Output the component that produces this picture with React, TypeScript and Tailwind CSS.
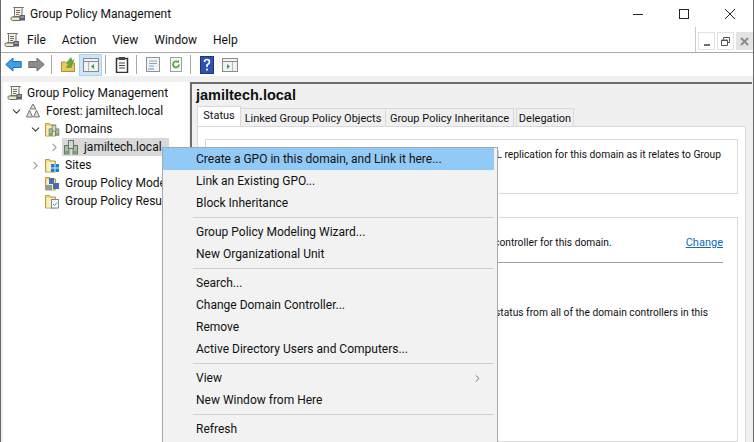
import { ChevronDown, ChevronRight } from 'lucide-react';
import { ReactNode } from 'react';

function ScrollIcon({ className = '' }: { className?: string }) {
  return (
    <svg width="16" height="16" viewBox="0 0 16 16" className={className}>
      <path d="M3.500 1.500h10q-1.500.5-1.500 2v7H3.500q1-.5 1-2V3q0-1-1-1.500z" fill="#f6f2e2" stroke="#6f6f66" />
      <path d="M6 4.500h4M6 6.500h4M6 8.500h3" stroke="#6f6f66" />
      <path d="M1.500 11h8.500v3.500H2.500q-1.500 0-1.500-1.700 0-1.300.5-1.800z" fill="#ece6cc" stroke="#6f6f66" />
      <rect x="9.500" y="9" width="5.500" height="5.500" fill="#5c6168" />
      <path d="M10.500 11h3.500" stroke="#c9ccd0" />
    </svg>
  );
}

function Folder({ children }: { children?: ReactNode }) {
  return (
    <svg width="16" height="16" viewBox="0 0 16 16">
      <path d="M1.500 15V2.500h4l1 1.500h5v11z" fill="#f3d77d" stroke="#bd9a45" />
      <rect x="2.500" y="5" width="8" height="9.500" fill="#fbeeb6" />
      {children}
    </svg>
  );
}

function ServerBits() {
  return (
    <>
      <rect x="1.500" y="6.500" width="4.500" height="8.500" fill="#a9bba9" stroke="#66766a" />
      <rect x="10" y="6.500" width="4.500" height="8.500" fill="#a9bba9" stroke="#66766a" />
      <rect x="5.500" y="1.500" width="5" height="8" fill="#ced9c8" stroke="#66766a" />
      <path d="M2.500 13h2.500M11 13h2.500" stroke="#57b043" strokeWidth="2" />
    </>
  );
}

function TreeRow({
  label,
  icon,
  indent,
  toggle,
  selected,
}: {
  label: string;
  icon: ReactNode;
  indent: string;
  toggle?: 'open' | 'closed';
  selected?: boolean;
}) {
  return (
    <div className={`flex h-[18px] items-center ${indent}`}>
      <span className="flex w-[16px] shrink-0 justify-center">
        {toggle === 'open' && <ChevronDown size={13} strokeWidth={2} className="text-[#3c3c3c]" />}
        {toggle === 'closed' && <ChevronRight size={13} strokeWidth={2} className="text-[#a6a6a6]" />}
      </span>
      <span className={`flex h-[18px] items-center gap-[5px] whitespace-nowrap pr-[7px] pl-px ${selected ? 'bg-[#d9d9d9]' : ''}`}>
        {icon}
        <span>{label}</span>
      </span>
    </div>
  );
}

function ToolButton({ children, active }: { children: ReactNode; active?: boolean }) {
  return (
    <span className={`flex h-[22px] w-[23px] items-center justify-center ${active ? 'border border-[#a9d3f2] bg-[#cde6f7]' : ''}`}>
      {children}
    </span>
  );
}

function Sep() {
  return <span className="ml-[3px] mr-[4px] h-[19px] w-px bg-[#a8a8a8]" />;
}

function MenuItem({ label, hot, arrow }: { label: string; hot?: boolean; arrow?: boolean }) {
  return (
    <div className={`flex h-[22px] items-center justify-between pr-[11px] pl-[33px] ${hot ? 'bg-[#91c9f7]' : ''}`}>
      <span>{label}</span>
      {arrow && <ChevronRight size={11} strokeWidth={1.5} className="text-[#333]" />}
    </div>
  );
}

function MenuSep() {
  return <div className="my-[3px] ml-[30px] h-px bg-[#d0d0d0]" />;
}

export default function App() {
  return (
    <div className="relative flex h-[442px] w-[754px] flex-col overflow-hidden border-x border-[#6a6a6a] bg-white font-['Roboto',sans-serif] text-[12px] leading-none text-[#111]">
      {/* Title bar */}
      <div className="flex h-[27px] shrink-0 items-center">
        <ScrollIcon className="ml-[9px]" />
        <span className="ml-[4px]">Group Policy Management</span>
        <div className="ml-auto flex items-center">
          <span className="flex w-[46px] justify-center">
            <svg width="12" height="12" viewBox="0 0 12 12"><path d="M1 6.500h10" stroke="#222" /></svg>
          </span>
          <span className="flex w-[46px] justify-center">
            <svg width="12" height="12" viewBox="0 0 12 12"><rect x="1.500" y="1.500" width="9" height="9" fill="none" stroke="#222" /></svg>
          </span>
          <span className="flex w-[46px] justify-center">
            <svg width="12" height="12" viewBox="0 0 12 12"><path d="M1 1l10 10M11 1L1 11" stroke="#222" /></svg>
          </span>
        </div>
      </div>

      {/* Menu bar */}
      <div className="flex h-[26px] shrink-0 items-center border-b border-[#a9a9a9]">
        <ScrollIcon className="ml-[3px]" />
        <div className="ml-[7px] flex gap-[16px]">
          <span>File</span>
          <span>Action</span>
          <span>View</span>
          <span>Window</span>
          <span>Help</span>
        </div>
        <div className="ml-auto flex h-full items-start border-l border-[#c9c9c9] pl-[2px] pt-[5px]">
          <span className="flex h-[18px] w-[17px] items-end justify-center border border-[#e2e2e2] pb-[3px]">
            <span className="h-[2px] w-[6px] bg-[#6f6f6f]" />
          </span>
          <span className="ml-[2px] flex h-[18px] w-[17px] items-center justify-center border border-[#e2e2e2]">
            <svg width="9" height="9" viewBox="0 0 9 9"><path d="M2.500 2.500V.5h6v5h-2M.5 3h6v5.500h-6zM.5 3.500h6" fill="none" stroke="#555" /></svg>
          </span>
          <span className="ml-[2px] flex h-[18px] w-[17px] items-center justify-center bg-[#e3e3e3]">
            <svg width="9" height="9" viewBox="0 0 9 9"><path d="M1 1l7 7M8 1L1 8" stroke="#8a8a8a" strokeWidth="2" /></svg>
          </span>
        </div>
      </div>

      {/* Toolbar */}
      <div className="flex h-[23px] shrink-0 items-center pl-px">
        <ToolButton>
          <svg width="17" height="15" viewBox="0 0 17 15"><path d="M.8 7.500 8 1v3.500h8.200v6H8V14z" fill="#3f9fe6" stroke="#1f6fb5" /></svg>
        </ToolButton>
        <ToolButton>
          <svg width="17" height="15" viewBox="0 0 17 15"><path d="M16.200 7.500 9 1v3.500H.8v6H9V14z" fill="#8c8c8c" stroke="#6c6c6c" /></svg>
        </ToolButton>
        <Sep />
        <ToolButton>
          <svg width="16" height="17" viewBox="0 0 16 17"><path d="M1.500 15.500V6h4l1 1h8v8.500z" fill="#ecc860" stroke="#b08f3b" /><path d="M6 12l2-4-2-1 5-6 1.500 3.500L14.500 3l-3 9z" fill="#6aa63a" /></svg>
        </ToolButton>
        <ToolButton active>
          <svg width="16" height="14" viewBox="0 0 16 14"><rect x=".5" y=".5" width="15" height="13" fill="#f1f1f1" stroke="#8c8c8c" /><path d="M.5 3.500h15" stroke="#8c8c8c" /><path d="M5.500 4v9" stroke="#b9b9b9" /><path d="M11 6 8 8.500l3 2.500z" fill="#3f9a55" /></svg>
        </ToolButton>
        <Sep />
        <ToolButton>
          <svg width="14" height="17" viewBox="0 0 14 17"><rect x="1.500" y="2.500" width="11" height="14" fill="#fff" stroke="#333" strokeWidth="1.500" /><rect x="4" y="1" width="6" height="3" fill="#444" /><path d="M4 7h6M4 9.500h6M4 12h6" stroke="#444" /></svg>
        </ToolButton>
        <Sep />
        <ToolButton>
          <svg width="16" height="17" viewBox="0 0 16 17"><rect x="1.500" y="1.500" width="13" height="14" fill="#f1f4f7" stroke="#8f959b" /><path d="M4 5h8M4 7.500h8M4 10h5" stroke="#8fa4b8" /><path d="M3 13h6" stroke="#5a9bd5" /></svg>
        </ToolButton>
        <ToolButton>
          <svg width="16" height="17" viewBox="0 0 16 17"><rect x="2.500" y="1.500" width="11" height="14" fill="#f6f6f6" stroke="#a0a0a0" /><path d="M11 8.500a3 3 0 1 1-1-2.300" fill="none" stroke="#57a845" strokeWidth="1.800" /><path d="M8.500 6l2.500-2v3z" fill="#57a845" /></svg>
        </ToolButton>
        <Sep />
        <ToolButton>
          <svg width="14" height="18" viewBox="0 0 14 18"><rect x=".5" y=".5" width="13" height="17" fill="#2f52b0" stroke="#1d3680" /><path d="M4.500 6q0-2.500 2.500-2.500T9.500 6q0 1.500-2.500 3v2M7 12.500v2" fill="none" stroke="#fff" strokeWidth="1.600" /></svg>
        </ToolButton>
        <ToolButton>
          <svg width="16" height="14" viewBox="0 0 16 14"><rect x=".5" y=".5" width="15" height="13" fill="#f1f1f1" stroke="#8c8c8c" /><path d="M.5 3.500h15" stroke="#8c8c8c" /><path d="M10.500 4v9" stroke="#b9b9b9" /><path d="m5 6 3 2.500L5 11z" fill="#3f9a55" /></svg>
        </ToolButton>
      </div>

      {/* Body */}
      <div className="flex min-h-0 flex-1 bg-[#f0f0f0] pl-[2px] pr-px pt-[6px]">
        {/* Tree */}
        <div className="h-full w-[186px] shrink-0 overflow-hidden bg-white pt-[2px]">
          <div className="flex h-[18px] items-center gap-[4px] whitespace-nowrap pl-[4px]">
            <ScrollIcon />
            <span>Group Policy Management</span>
          </div>
          <TreeRow
            label="Forest: jamiltech.local"
            indent="pl-[5px]"
            toggle="open"
            icon={
              <svg width="16" height="16" viewBox="0 0 16 16"><path d="M8 1l3 5H5zM4.500 7l3 7h-6zM11.500 7l3 7h-6z" fill="#dcdcdc" stroke="#77787a" /></svg>
            }
          />
          <TreeRow
            label="Domains"
            indent="pl-[24px]"
            toggle="open"
            icon={<Folder><g transform="translate(4 3) scale(.75)"><ServerBits /></g></Folder>}
          />
          <TreeRow
            label="jamiltech.local"
            indent="pl-[43px]"
            toggle="closed"
            selected
            icon={<svg width="16" height="16" viewBox="0 0 16 16"><ServerBits /></svg>}
          />
          <TreeRow
            label="Sites"
            indent="pl-[24px]"
            toggle="closed"
            icon={<Folder><rect x="7" y="7" width="8" height="8" fill="#1f7fc9" /><path d="M7 11h8M11 7v8" stroke="#d5ecfa" /></Folder>}
          />
          <TreeRow
            label="Group Policy Modeling"
            indent="pl-[24px]"
            icon={<Folder><rect x="5" y="3" width="5" height="6" fill="#3f6fb5" /><rect x="9" y="8" width="6" height="6" fill="#4a6fa8" /><rect x="2" y="10" width="6" height="5" fill="#8f98a6" /></Folder>}
          />
          <TreeRow
            label="Group Policy Results"
            indent="pl-[24px]"
            icon={<Folder><rect x="7.500" y="6.500" width="7" height="8.500" fill="#fff" stroke="#7f8a99" /><path d="M9 11l1.500 1.500 2.500-3" fill="none" stroke="#3f7fc0" /></Folder>}
          />
        </div>

        {/* Splitter */}
        <div className="w-px shrink-0" />

        {/* Details pane */}
        <div className="flex min-w-0 flex-1 flex-col border-t-2 border-l-2 border-[#6d6d6d] pr-[6px] pl-[4px] text-[11px]">
          <div className="h-[22px] shrink-0 pt-[4px] font-['Liberation_Sans',sans-serif] text-[14.500px] font-bold text-[#111]">
            jamiltech.local
          </div>
          <div className="flex h-[20px] shrink-0 items-end whitespace-nowrap pl-px">
            <span className="z-10 flex h-[20px] w-[44px] items-center justify-center border border-b-0 border-[#d9d9d9] bg-white pb-[2px]">Status</span>
            <span className="flex h-[18px] w-[145px] items-center justify-center border-t border-r border-[#d9d9d9] pt-px">Linked Group Policy Objects</span>
            <span className="flex h-[18px] w-[128px] items-center justify-center border-t border-r border-[#d9d9d9] pt-px">Group Policy Inheritance</span>
            <span className="ml-[2px] flex h-[18px] w-[58px] items-center justify-center border-x border-t border-[#d9d9d9] pt-px">Delegation</span>
          </div>
          <div className="ml-px flex min-h-0 flex-1 flex-col border-x border-t border-[#d9d9d9] bg-white px-[7px] pt-[12px]">
            <div className="flex h-[55px] shrink-0 justify-end border border-[#d9d9d9] pr-[16px] pt-[10px] text-[10.250px]">
              <span className="whitespace-nowrap">SYSVOL replication for this domain as it relates to Group</span>
            </div>
            <div className="mt-[23px] min-h-0 flex-1 border border-[#d9d9d9] px-[14px]">
              <div className="flex h-[45px] items-end justify-end gap-[74px] border-b border-[#a0a0a0] pb-[14px]">
                <span className="text-[10.250px]">controller for this domain.</span>
                <span className="text-[#0f6cbd] underline">Change</span>
              </div>
              <div className="mt-[45px] pr-[15px] text-right text-[10.250px]">status from all of the domain controllers in this</div>
            </div>
          </div>
        </div>
      </div>

      {/* Context menu */}
      <div className="absolute left-[161px] top-[147px] h-[300px] w-[336px] border border-[#a8a8a8] bg-[#f2f2f2] pr-[3px]">
        <MenuItem label="Create a GPO in this domain, and Link it here..." hot />
        <MenuItem label="Link an Existing GPO..." />
        <MenuItem label="Block Inheritance" />
        <MenuSep />
        <MenuItem label="Group Policy Modeling Wizard..." />
        <MenuItem label="New Organizational Unit" />
        <MenuSep />
        <MenuItem label="Search..." />
        <MenuItem label="Change Domain Controller..." />
        <MenuItem label="Remove" />
        <MenuItem label="Active Directory Users and Computers..." />
        <MenuSep />
        <MenuItem label="View" arrow />
        <MenuItem label="New Window from Here" />
        <MenuSep />
        <MenuItem label="Refresh" />
      </div>
    </div>
  );
}
